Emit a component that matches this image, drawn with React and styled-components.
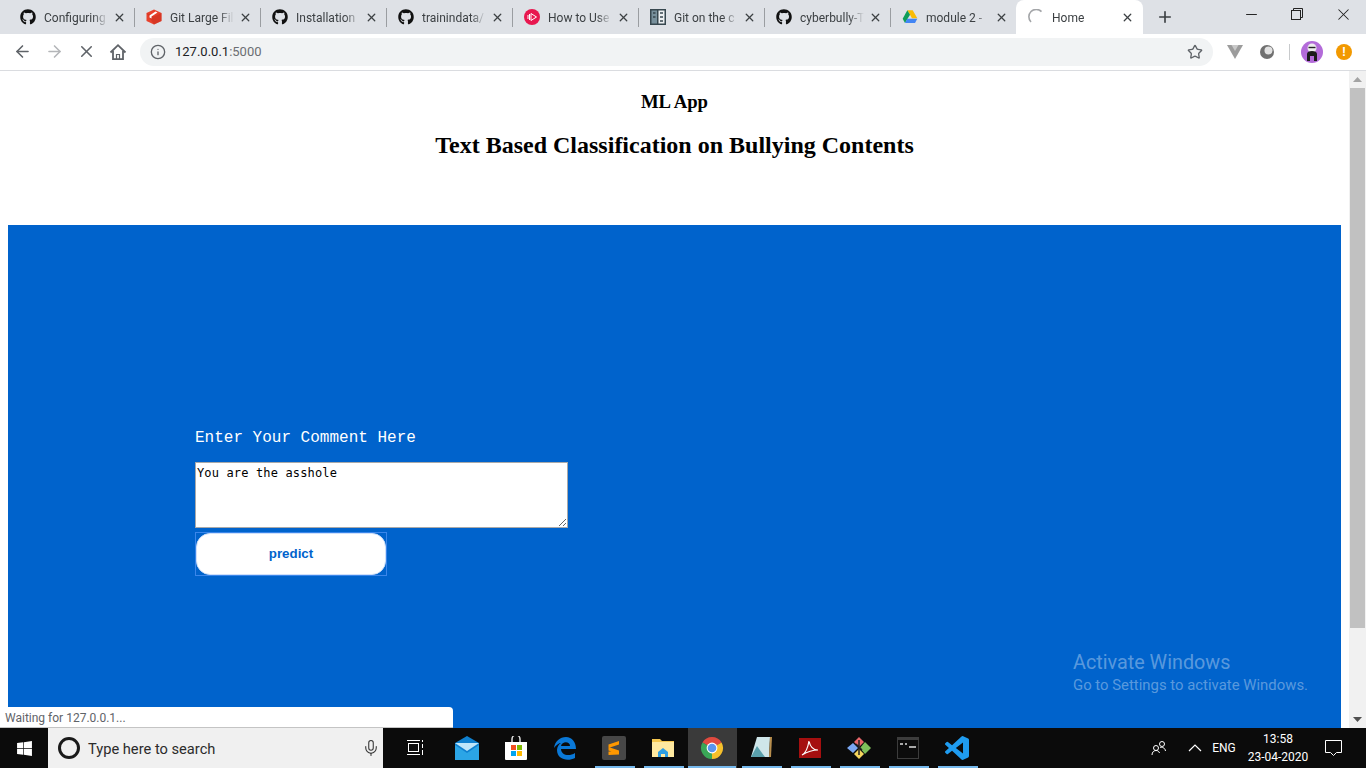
import React from 'react'
import styled, { createGlobalStyle } from 'styled-components'
import { FaGithub, FaWindows } from 'react-icons/fa'
import { ArrowLeft, ArrowRight, X, Info, Star, Minus, Plus, Mic } from 'lucide-react'

const GlobalStyle = createGlobalStyle`
  html, body { margin: 0; padding: 0; height: 100%; overflow: hidden; }
  body { font-family: Roboto, "Open Sans", sans-serif; background: #fff; }
  * { box-sizing: border-box; }
`

const Screen = styled.div`
  position: relative;
  width: 1366px;
  height: 768px;
  display: flex;
  flex-direction: column;
  overflow: hidden;
`

/* browser tabs */
const TabStrip = styled.div`
  height: 34px;
  flex: none;
  display: flex;
  padding-left: 8px;
  background: #dee1e6;
`

const Tab = styled.div`
  position: relative;
  width: ${p => (p.$active ? '127px' : '126px')};
  display: flex;
  align-items: center;
  padding-left: 12px;
  color: #3c4043;
  background: ${p => (p.$active ? '#fff' : 'transparent')};
  border-radius: ${p => (p.$active ? '8px 8px 0 0' : '0')};
  &::after {
    content: "";
    display: ${p => (p.$last || p.$active ? 'none' : 'block')};
    position: absolute;
    right: -1px;
    top: 8px;
    height: 19px;
    width: 1px;
    background: #9a9da1;
  }
`

const TabIcon = styled.span`
  width: 16px;
  height: 16px;
  flex: none;
  display: flex;
  color: #111;
  svg { display: block; }
`

const TabTitle = styled.span`
  width: 64px;
  margin-left: 8px;
  padding-top: 1px;
  font-size: 12px;
  white-space: nowrap;
  overflow: hidden;
  -webkit-mask-image: linear-gradient(to right, #000 76%, transparent 100%);
  mask-image: linear-gradient(to right, #000 76%, transparent 100%);
`

const TabClose = styled.span`
  margin-left: 4px;
  width: 14px;
  height: 14px;
  display: flex;
  align-items: center;
  justify-content: center;
  color: #3c4043;
`

const NewTab = styled.span`
  margin-left: 12px;
  width: 20px;
  display: flex;
  align-items: center;
  justify-content: center;
  color: #3c4043;
`

const WindowControls = styled.div`
  margin-left: auto;
  display: flex;
`

const WindowButton = styled.span`
  width: 46px;
  height: 28px;
  display: flex;
  align-items: center;
  justify-content: center;
  color: #222;
`

/* address bar row */
const Toolbar = styled.div`
  height: 37px;
  flex: none;
  display: flex;
  align-items: center;
  padding: 0 0 1px 6px;
  background: #fff;
  border-bottom: 1px solid #dadce0;
`

const NavButton = styled.span`
  width: 32px;
  display: flex;
  justify-content: center;
  color: ${p => (p.$disabled ? '#b4b6b9' : '#5f6368')};
`

const Omnibox = styled.div`
  flex: 1;
  height: 28px;
  margin: 0 6px;
  display: flex;
  align-items: center;
  padding: 0 10px;
  background: #f1f3f4;
  border-radius: 14px;
`

const Url = styled.span`
  margin-left: 9px;
  font-size: 13px;
  color: #202124;
  span { color: #6b6e72; }
`

const StarSlot = styled.span`
  margin-left: auto;
  display: flex;
  color: #5f6368;
`

const ExtSlot = styled.span`
  width: 32px;
  display: flex;
  justify-content: center;
`

const ToolbarDivider = styled.span`
  width: 1px;
  height: 16px;
  margin: 0 6px;
  background: #c8cacc;
`

const Avatar = styled.span`
  width: 22px;
  height: 22px;
  margin: 0 5px;
  border-radius: 50%;
  background: #b36bd9;
  display: flex;
  align-items: center;
  justify-content: center;
`

const AlertDot = styled.span`
  width: 16px;
  height: 16px;
  margin: 0 14px 0 8px;
  border-radius: 50%;
  background: #f29900;
  color: #fff;
  font: bold 12px/16px "Liberation Sans", sans-serif;
  text-align: center;
`

/* page area */
const Viewport = styled.div`
  flex: 1;
  min-height: 0;
  display: flex;
  background: #fff;
`

const Page = styled.main`
  flex: 1;
  min-width: 0;
  padding: 0 8px;
  overflow: hidden;
  display: flex;
  flex-direction: column;
  font-family: "Liberation Serif", serif;
`

const Header = styled.header`
  height: 154px;
  flex: none;
  padding-top: 20px;
  text-align: center;
  color: #000;
`

const AppName = styled.h3`
  margin: 0;
  font-size: 18.72px;
  line-height: 22px;
  font-weight: bold;
`

const PageTitle = styled.h2`
  margin: 18px 0 0;
  font-size: 24px;
  line-height: 28px;
  font-weight: bold;
`

const Banner = styled.section`
  flex: 1;
  padding: 204px 0 0 187px;
  background: #0063cc;
`

const CommentForm = styled.form`
  display: flex;
  flex-direction: column;
  align-items: flex-start;
`

const FieldLabel = styled.label`
  font: 16px/18px "Liberation Mono", monospace;
  color: #fff;
  margin-bottom: 15px;
`

const CommentBox = styled.textarea`
  width: 373px;
  height: 66px;
  margin: 0 0 4px;
  padding: 3px 1px;
  border: 1px solid #a9a9a9;
  background: #fff;
  color: #000;
  font: 12px/15px "DejaVu Sans Mono", monospace;
  letter-spacing: 0.15px;
  outline: none;
`

const ButtonFrame = styled.div`
  width: 192px;
  height: 44px;
  border: 1px solid #3b86ea;
  display: flex;
`

const PredictButton = styled.button`
  flex: 1;
  padding: 0 0 2px;
  border: 1px solid #cfe0fa;
  border-radius: 14px;
  background: #fff;
  color: #0063cc;
  font: bold 13.33px "Liberation Sans", sans-serif;
`

const Scrollbar = styled.div`
  width: 17px;
  flex: none;
  display: flex;
  flex-direction: column;
  align-items: center;
  background: #f1f1f1;
`

const ScrollArrow = styled.span`
  height: 17px;
  flex: none;
  margin-top: ${p => (p.$end ? 'auto' : '0')};
  display: flex;
  align-items: center;
  justify-content: center;
  svg { display: block; }
`

const ScrollThumb = styled.span`
  width: 15px;
  height: 540px;
  background: #c1c1c1;
`

/* overlays */
const StatusBubble = styled.div`
  position: absolute;
  left: 0;
  bottom: 40px;
  width: 453px;
  height: 21px;
  padding: 3px 0 0 5px;
  background: #fff;
  border-top-right-radius: 4px;
  border-bottom: 1px solid #c4c4c4;
  font-size: 12px;
  line-height: 16px;
  color: #5f6368;
`

const ActivateNote = styled.div`
  position: absolute;
  left: 1073px;
  top: 650px;
  color: rgba(255, 255, 255, 0.36);
`

const ActivateTitle = styled.div`
  font-size: 19.8px;
  line-height: 25px;
`

const ActivateHint = styled.div`
  font-size: 14.9px;
  line-height: 21px;
`

/* windows taskbar */
const Taskbar = styled.footer`
  height: 40px;
  flex: none;
  display: flex;
  align-items: center;
  background: #0b0b0b;
  color: #fff;
`

const StartButton = styled.span`
  width: 48px;
  height: 40px;
  flex: none;
  display: flex;
  align-items: center;
  justify-content: center;
`

const SearchBox = styled.div`
  width: 335px;
  height: 40px;
  flex: none;
  display: flex;
  align-items: center;
  padding: 0 0 0 10px;
  background: #f0f0f0;
  margin-right: 11px;
`

const Cortana = styled.span`
  width: 22px;
  height: 22px;
  flex: none;
  border: 3px solid #1a1a1a;
  border-radius: 50%;
`

const SearchText = styled.span`
  margin-left: 8px;
  padding-top: 1px;
  font-size: 14.67px;
  color: #2b2b2b;
`

const MicSlot = styled.span`
  margin-left: auto;
  margin-right: 3px;
  display: flex;
  color: #333;
`

const TaskItem = styled.span`
  position: relative;
  width: 49px;
  height: 40px;
  flex: none;
  padding-right: 1px;
  display: flex;
  align-items: center;
  justify-content: center;
  background: ${p => (p.$active ? '#3a3a3a' : 'transparent')};
  &::after {
    content: "";
    display: ${p => (p.$running ? 'block' : 'none')};
    position: absolute;
    bottom: 0;
    left: ${p => (p.$active ? '0' : '5px')};
    right: ${p => (p.$active ? '1px' : '4px')};
    height: 2px;
    background: #76b9ed;
  }
`

const Tray = styled.div`
  margin-left: auto;
  padding-right: 16px;
  display: flex;
  align-items: center;
  height: 40px;
`

const TrayIcon = styled.span`
  width: ${p => p.$w}px;
  display: flex;
  justify-content: center;
`

const TrayText = styled.span`
  font-size: 12px;
  width: 32px;
  text-align: center;
`

const Clock = styled.div`
  width: 76px;
  font-size: 12px;
  line-height: 18px;
  text-align: center;
`

const NotifySlot = styled.span`
  width: 34px;
  display: flex;
  justify-content: center;
`

const HomeGlyph = () => (
  <svg width="18" height="18" viewBox="0 0 18 18" fill="none" stroke="currentColor" strokeWidth="1.8">
    <path d="M1.500 9.500L9 2.200l7.500 7.300" />
    <path d="M4 8v8.100h10V8" />
    <path d="M7.500 16v-4.500h3V16" strokeWidth="1.200" />
  </svg>
)

const LfsIcon = () => (
  <svg width="16" height="16" viewBox="0 0 16 16">
    <path d="M8 0.500l7.500 3.500v8L8 15.500.5 12V4z" fill="#e8412c" />
    <path d="M.5 4L8 7.500 15.500 4V12L8 15.500z" fill="#c9301f" opacity=".55" />
    <path d="M3.500 6.500L9.500 2.500l2 1-6 4v2l-2-1z" fill="#fff" />
  </svg>
)

const PlayCircleIcon = () => (
  <svg width="16" height="16" viewBox="0 0 16 16">
    <circle cx="8" cy="8" r="8" fill="#e8174f" />
    <path d="M7 4.500v7L12.500 8z" fill="none" stroke="#fff" strokeWidth="1" />
    <path d="M4 6v4M5.500 5v6" stroke="#fff" strokeWidth="1" />
  </svg>
)

const BookIcon = () => (
  <svg width="16" height="16" viewBox="0 0 16 16">
    <rect x="0" y="0" width="16" height="16" fill="#37474f" />
    <rect x="1.500" y="1.500" width="5.500" height="13" fill="#78909c" />
    <rect x="8.500" y="1.500" width="6" height="13" fill="#eceff1" />
    <path d="M10 4h3M10 8h3M10 12h3" stroke="#37474f" strokeWidth="1.500" />
    <path d="M3 4h2.500M3 8h2.500" stroke="#37474f" strokeWidth="1.500" />
  </svg>
)

const DriveIcon = () => (
  <svg width="16" height="16" viewBox="0 0 24 24">
    <path d="M8 2h8l7 12h-8z" fill="#fbbc04" />
    <path d="M8 2l4 6.800L4.500 21 1 14.500z" fill="#0f9d58" />
    <path d="M4.500 21L8 14.500h15L19.500 21z" fill="#4285f4" />
  </svg>
)

const SpinnerIcon = () => (
  <svg width="16" height="16" viewBox="0 0 16 16">
    <path d="M13.500 2.600A7 7 0 1 0 3 13" fill="none" stroke="#a3a5a8" strokeWidth="1.600" />
  </svg>
)

const VueMark = () => (
  <svg width="18" height="16" viewBox="0 0 18 16">
    <path d="M1 1h16L9 15z" fill="#9c9c9c" />
    <path d="M5.500 1h7L9 7z" fill="#c9c9c9" />
  </svg>
)

const BallMark = () => (
  <svg width="16" height="16" viewBox="0 0 16 16">
    <circle cx="8" cy="8" r="7" fill="#707070" />
    <circle cx="9.500" cy="6.500" r="4" fill="#e2e2e2" />
  </svg>
)

const AvatarMark = () => (
  <svg width="16" height="20" viewBox="0 0 16 20">
    <circle cx="8" cy="6" r="4.500" fill="#eee" />
    <path d="M3 19v-7c0-2 2-3 5-3s5 1 5 3v7h-3v-5H6v5z" fill="#1c1c1c" />
    <path d="M4.500 5.500h7" stroke="#222" strokeWidth="1.400" />
  </svg>
)

const RestoreIcon = () => (
  <svg width="12" height="12" viewBox="0 0 12 12" fill="none" stroke="currentColor">
    <rect x="0.500" y="2.500" width="9" height="9" />
    <path d="M2.500 2.500v-2h9v9h-2" />
  </svg>
)

const TaskViewIcon = () => (
  <svg width="22" height="16" viewBox="0 0 22 16" fill="none" stroke="#fff">
    <rect x="1.500" y="3.500" width="10" height="8" />
    <path d="M0 .5h13M0 14.500h13M15.500 0v2M15.500 4v4M15.500 10v5" />
  </svg>
)

const MailIcon = () => (
  <svg width="24" height="24" viewBox="0 0 24 24">
    <path d="M0 7L12 0l12 7v17H0z" fill="#0f80cf" />
    <path d="M0 7h24L12 15z" fill="#bfe6fa" />
    <path d="M0 9l12 8 12-8v15H0z" fill="#2ba5e6" />
  </svg>
)

const StoreIcon = () => (
  <svg width="24" height="24" viewBox="0 0 24 24">
    <path d="M8 6V3a4 4 0 0 1 8 0v3" fill="none" stroke="#ddd" strokeWidth="1.500" />
    <path d="M1 6h22v17a1 1 0 0 1-1 1H2a1 1 0 0 1-1-1z" fill="#fff" />
    <rect x="7" y="9" width="5" height="5" fill="#f25022" />
    <rect x="13" y="9" width="5" height="5" fill="#7fba00" />
    <rect x="7" y="15" width="5" height="5" fill="#00a4ef" />
    <rect x="13" y="15" width="5" height="5" fill="#ffb900" />
  </svg>
)

const EdgeIcon = () => (
  <svg width="24" height="24" viewBox="0 0 24 24">
    <path d="M1 12C2 5 7 1 13 1c6 0 10 5 10 12H8c0 6 8 8 14 4v5c-8 4-18 1-18-8 0-3 2-6 4-7-2 0-5 2-7 5zm7-2h9c0-5-8-5-9 0z" fill="#0a78d7" />
  </svg>
)

const SublimeIcon = () => (
  <svg width="24" height="24" viewBox="0 0 24 24">
    <rect width="24" height="24" rx="2" fill="#474747" />
    <path d="M6.500 8.500L17 5v3.500L6.500 12zM6.500 11l10.500 3.500V18L6.500 14.500zM17 14.500v4L6.500 19v-3.500z" fill="#ff9800" />
  </svg>
)

const FolderIcon = () => (
  <svg width="22" height="20" viewBox="0 0 22 20">
    <path d="M0 1h8l2 2h12v16H0z" fill="#f5c74f" />
    <path d="M0 4h22v15H0z" fill="#ffe9a0" />
    <path d="M6 19v-5l5-4 5 4v5h-3v-3H9v3z" fill="#2f9fe2" />
  </svg>
)

const ChromeIcon = () => (
  <svg width="24" height="24" viewBox="0 0 24 24">
    <path d="M12 12L2.470 6.500A11 11 0 0 1 21.530 6.500z" fill="#e04a3f" />
    <path d="M12 12L21.530 6.500A11 11 0 0 1 12 23z" fill="#f6c02c" />
    <path d="M12 12L12 23A11 11 0 0 1 2.470 6.500z" fill="#3aa757" />
    <circle cx="12" cy="12" r="5.400" fill="#fff" />
    <circle cx="12" cy="12" r="4.300" fill="#5a95ee" />
  </svg>
)

const NotesIcon = () => (
  <svg width="24" height="24" viewBox="0 0 24 24">
    <path d="M8 1h13l-1 20H2z" fill="#cfe6ea" />
    <path d="M21 1h2l-1 20h-2z" fill="#b98f4e" />
    <path d="M2 21l6-11 8 11z" fill="#5aa0ac" />
  </svg>
)

const AcrobatIcon = () => (
  <svg width="22" height="20" viewBox="0 0 22 20">
    <rect width="22" height="20" fill="#a50f0f" />
    <path d="M3 17c4-2 6-8 7-14 1 5 3 9 9 9-6 0-11 2-16 5z" fill="none" stroke="#fff" strokeWidth="1.200" />
  </svg>
)

const GitGuiIcon = () => (
  <svg width="24" height="24" viewBox="0 0 24 24">
    <path d="M12 1l5 5-5 5-5-5z" fill="#e8666a" />
    <path d="M18 6l6 6-6 6-5-6z" fill="#7ec05b" />
    <path d="M6 7l5 5-5 5-6-5z" fill="#7aa7f2" />
    <path d="M12 13l5 5-5 5-5-5z" fill="#f4d55e" />
    <path d="M12 4v15M9 8l6 6" stroke="#222" strokeWidth="1.500" />
  </svg>
)

const TerminalIcon = () => (
  <svg width="22" height="22" viewBox="0 0 22 22">
    <rect width="22" height="22" fill="#3c3c3c" />
    <rect x="1" y="3" width="20" height="18" fill="#0c0c0c" />
    <path d="M3 7h3M8 7h2M12 10h7" stroke="#ddd" strokeWidth="1.500" />
  </svg>
)

const VsCodeIcon = () => (
  <svg width="24" height="24" viewBox="0 0 24 24">
    <path d="M23.150 2.587L18.210.21a1.494 1.494 0 0 0-1.705.29l-9.460 8.630-4.120-3.128a.999.999 0 0 0-1.276.057L.327 7.261A1 1 0 0 0 .326 8.740L3.899 12 .326 15.260a1 1 0 0 0 .001 1.479L1.650 17.940a.999.999 0 0 0 1.276.057l4.120-3.128 9.460 8.630a1.492 1.492 0 0 0 1.704.29l4.942-2.377A1.500 1.500 0 0 0 24 20.060V3.939a1.500 1.500 0 0 0-.85-1.352zm-5.146 14.861L10.826 12l7.178-5.448v10.896z" fill="#1f9cf0" />
  </svg>
)

const PeopleIcon = () => (
  <svg width="16" height="16" viewBox="0 0 16 16" fill="none" stroke="#fff">
    <circle cx="11" cy="4" r="2.500" />
    <circle cx="5" cy="8" r="2.500" />
    <path d="M1 15c0-3 2-4.500 4-4.500s3 1 3.500 2.500M9 7.500c2-.5 5 0 5.500 3.500" />
  </svg>
)

const CaretIcon = () => (
  <svg width="14" height="8" viewBox="0 0 14 8" fill="none" stroke="#fff" strokeWidth="1.200">
    <path d="M1 7l6-6 6 6" />
  </svg>
)

const NotifyIcon = () => (
  <svg width="17" height="16" viewBox="0 0 17 16" fill="none" stroke="#fff">
    <path d="M.5.5h16v12h-5l-3 3-3-3h-5z" />
  </svg>
)

const tabs = [
  { title: 'Configuring', icon: <FaGithub size={16} /> },
  { title: 'Git Large Fil', icon: <LfsIcon /> },
  { title: 'Installation', icon: <FaGithub size={16} /> },
  { title: 'trainindata/', icon: <FaGithub size={16} /> },
  { title: 'How to Use', icon: <PlayCircleIcon /> },
  { title: 'Git on the c', icon: <BookIcon /> },
  { title: 'cyberbully-T', icon: <FaGithub size={16} /> },
  { title: 'module 2 -', icon: <DriveIcon />, last: true },
  { title: 'Home', icon: <SpinnerIcon />, active: true },
]

const taskItems = [
  { icon: <TaskViewIcon /> },
  { icon: <MailIcon /> },
  { icon: <StoreIcon /> },
  { icon: <EdgeIcon /> },
  { icon: <SublimeIcon />, running: true },
  { icon: <FolderIcon />, running: true },
  { icon: <ChromeIcon />, running: true, active: true },
  { icon: <NotesIcon />, running: true },
  { icon: <AcrobatIcon />, running: true },
  { icon: <GitGuiIcon />, running: true },
  { icon: <TerminalIcon />, running: true },
  { icon: <VsCodeIcon />, running: true },
]

const App = () => {
  return (
    <Screen>
      <GlobalStyle />
      <TabStrip>
        {tabs.map(tab => (
          <Tab key={tab.title} $active={tab.active} $last={tab.last}>
            <TabIcon>{tab.icon}</TabIcon>
            <TabTitle>{tab.title}</TabTitle>
            <TabClose><X size={13} strokeWidth={2.4} /></TabClose>
          </Tab>
        ))}
        <NewTab><Plus size={18} strokeWidth={2.2} /></NewTab>
        <WindowControls>
          <WindowButton><Minus size={17} strokeWidth={1.4} /></WindowButton>
          <WindowButton><RestoreIcon /></WindowButton>
          <WindowButton><X size={19} strokeWidth={1.300} /></WindowButton>
        </WindowControls>
      </TabStrip>

      <Toolbar>
        <NavButton><ArrowLeft size={19} strokeWidth={2} /></NavButton>
        <NavButton $disabled><ArrowRight size={19} strokeWidth={2} /></NavButton>
        <NavButton><X size={19} strokeWidth={2} /></NavButton>
        <NavButton><HomeGlyph /></NavButton>
        <Omnibox>
          <Info size={16} color="#5f6368" strokeWidth={2} />
          <Url>127.0.0.1<span>:5000</span></Url>
          <StarSlot><Star size={16} strokeWidth={2} /></StarSlot>
        </Omnibox>
        <ExtSlot><VueMark /></ExtSlot>
        <ExtSlot><BallMark /></ExtSlot>
        <ToolbarDivider />
        <Avatar><AvatarMark /></Avatar>
        <AlertDot>!</AlertDot>
      </Toolbar>

      <Viewport>
        <Page>
          <Header>
            <AppName>ML App</AppName>
            <PageTitle>Text Based Classification on Bullying Contents</PageTitle>
          </Header>
          <Banner>
            <CommentForm onSubmit={e => e.preventDefault()}>
              <FieldLabel htmlFor="comment">Enter Your Comment Here</FieldLabel>
              <CommentBox id="comment" defaultValue="You are the asshole" />
              <ButtonFrame>
                <PredictButton type="submit">predict</PredictButton>
              </ButtonFrame>
            </CommentForm>
          </Banner>
        </Page>
        <Scrollbar>
          <ScrollArrow>
            <svg width="9" height="5" viewBox="0 0 9 5"><path d="M4.500 0L9 5H0z" fill="#a3a3a3" /></svg>
          </ScrollArrow>
          <ScrollThumb />
          <ScrollArrow $end>
            <svg width="9" height="5" viewBox="0 0 9 5"><path d="M0 0h9L4.500 5z" fill="#505050" /></svg>
          </ScrollArrow>
        </Scrollbar>
      </Viewport>

      <Taskbar>
        <StartButton><FaWindows size={17} color="#fff" /></StartButton>
        <SearchBox>
          <Cortana />
          <SearchText>Type here to search</SearchText>
          <MicSlot><Mic size={18} strokeWidth={1.4} /></MicSlot>
        </SearchBox>
        {taskItems.map((item, i) => (
          <TaskItem key={i} $running={item.running} $active={item.active}>{item.icon}</TaskItem>
        ))}
        <Tray>
          <TrayIcon $w={46}><PeopleIcon /></TrayIcon>
          <TrayIcon $w={26}><CaretIcon /></TrayIcon>
          <TrayText>ENG</TrayText>
          <Clock>
            <div>13:58</div>
            <div>23-04-2020</div>
          </Clock>
          <NotifySlot><NotifyIcon /></NotifySlot>
        </Tray>
      </Taskbar>

      <StatusBubble>Waiting for 127.0.0.1...</StatusBubble>
      <ActivateNote>
        <ActivateTitle>Activate Windows</ActivateTitle>
        <ActivateHint>Go to Settings to activate Windows.</ActivateHint>
      </ActivateNote>
    </Screen>
  )
}

export default App
